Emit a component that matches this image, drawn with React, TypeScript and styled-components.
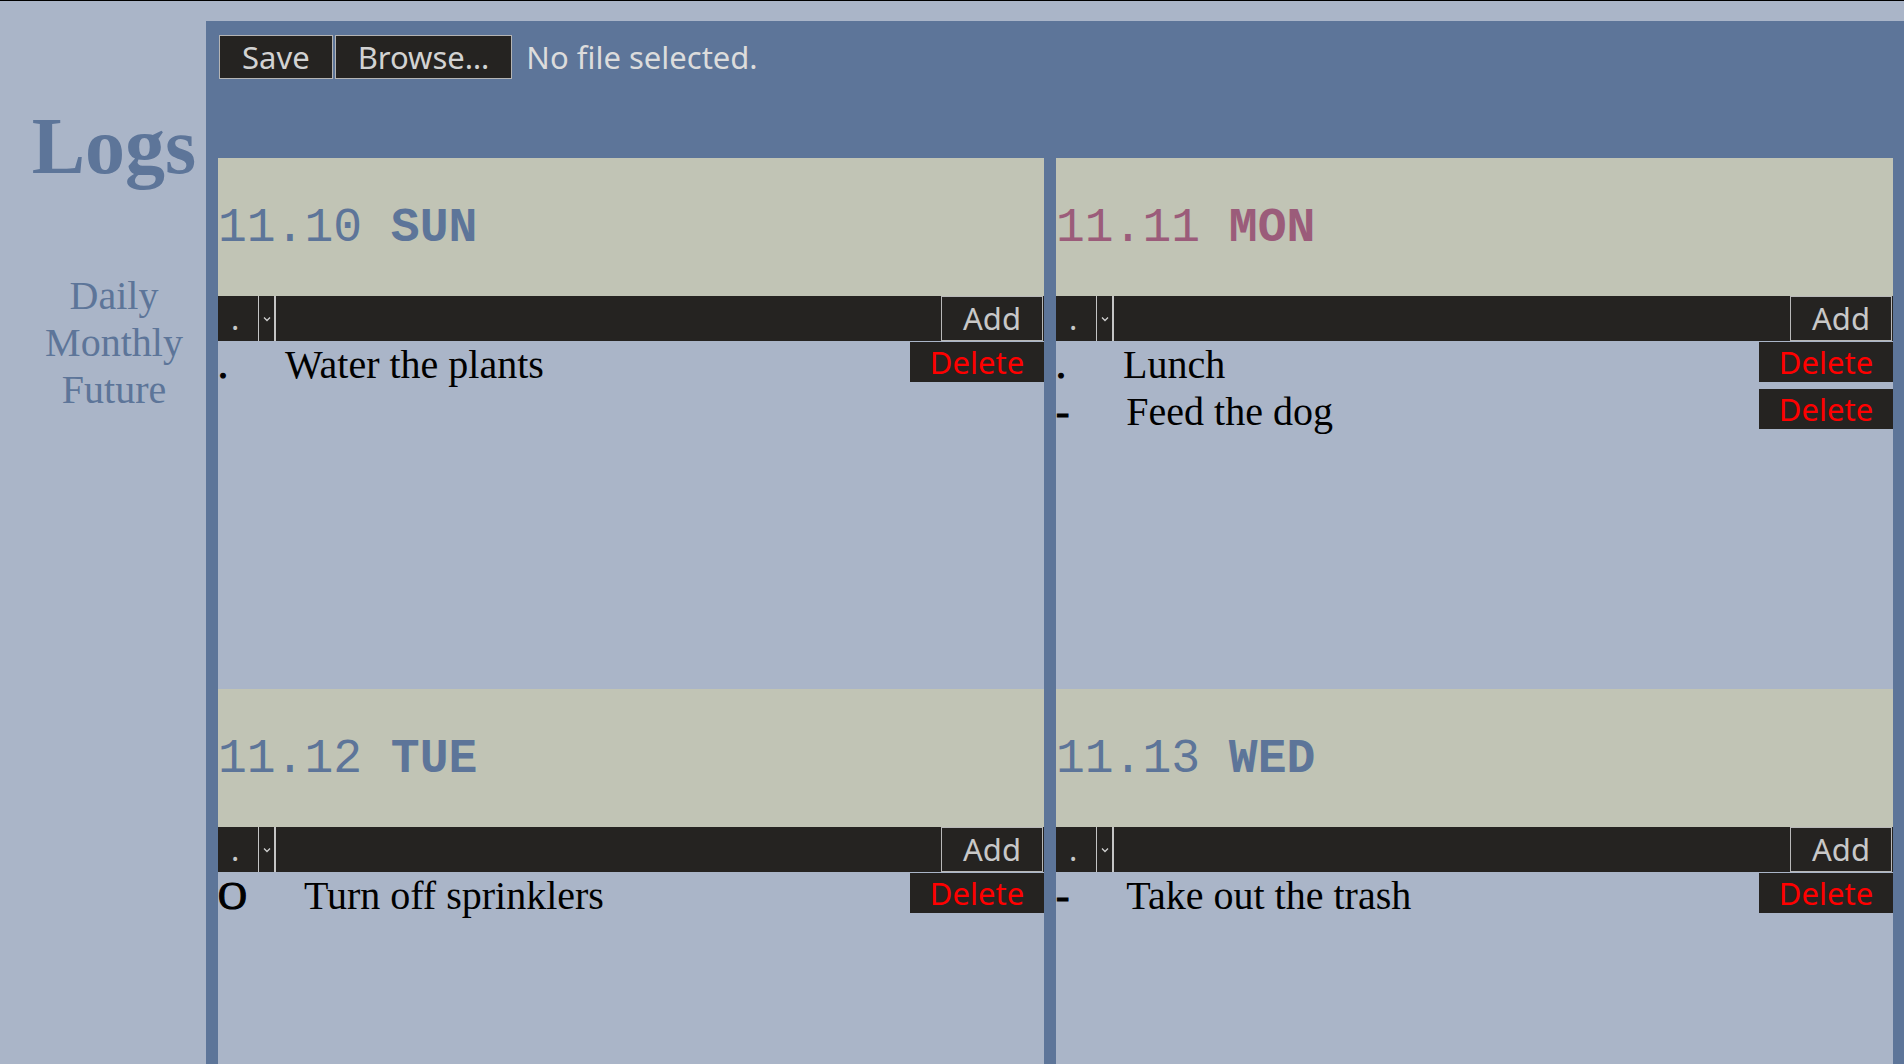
import styled, { createGlobalStyle } from 'styled-components'

const GlobalStyle = createGlobalStyle`
  html, body {
    margin: 0;
    padding: 0;
    overflow: hidden;
    background: #aab5c8;
  }
  body {
    font-family: "Liberation Serif", serif;
  }
`

type Entry = { mark: string, text: string }
type Day = { date: string, weekday: string, color: string, entries: Entry[] }

const days: Day[] = [
  { date: '11.10', weekday: 'SUN', color: '#5d7599', entries: [{ mark: '.', text: 'Water the plants' }] },
  { date: '11.11', weekday: 'MON', color: '#9b5c7a', entries: [{ mark: '.', text: 'Lunch' }, { mark: '-', text: 'Feed the dog' }] },
  { date: '11.12', weekday: 'TUE', color: '#5d7599', entries: [{ mark: 'O', text: 'Turn off sprinklers' }] },
  { date: '11.13', weekday: 'WED', color: '#5d7599', entries: [{ mark: '-', text: 'Take out the trash' }] },
]

const Page = styled.div`
  display: flex;
  border-top: 1px solid #000;
`

const Sidebar = styled.aside`
  flex: 0 0 206px;
  box-sizing: border-box;
  padding-left: 22px;
  text-align: center;
  color: #5d7599;
`

const Title = styled.h1`
  margin: 100px 0 0;
  font-family: "Liberation Serif", serif;
  font-size: 80px;
  font-weight: bold;
`

const Nav = styled.nav`
  margin-top: 80px;
  display: flex;
  flex-direction: column;
  font-size: 40px;
`

const NavLink = styled.a`
  color: #5d7599;
  text-decoration: none;
`

const Panel = styled.main`
  flex: 1;
  margin-top: 20px;
  padding: 14px 11px 0 12px;
  background: #5d7599;
`

const Toolbar = styled.div`
  display: flex;
  align-items: center;
  height: 44px;
  margin: 0 0 79px 1px;
  font-family: "Noto Sans", sans-serif;
  font-size: 31px;
`

const ToolButton = styled.button`
  height: 44px;
  padding: 0 22px;
  margin-right: 2px;
  background: #252321;
  border: 1px solid #b4b4b4;
  color: #d2d2d2;
  font: inherit;
  line-height: 1;
`

const FileName = styled.span`
  margin-left: 12px;
  color: #dcdcdc;
`

const Grid = styled.div`
  display: grid;
  grid-template-columns: 826px 837px;
  grid-auto-rows: 531px;
  column-gap: 12px;
`

const Card = styled.section`
  display: flex;
  flex-direction: column;
  background: #aab5c8;
`

const CardHeader = styled.header<{ $color: string }>`
  height: 138px;
  box-sizing: border-box;
  padding-top: 2px;
  display: flex;
  align-items: center;
  background: #c1c4b5;
  color: ${p => p.$color};
  font-family: "Liberation Mono", monospace;
  font-size: 48px;
  white-space: pre;
`

const EntryRow = styled.form`
  display: flex;
  height: 45px;
  background: #252321;
  font-family: "Noto Sans", sans-serif;
  font-size: 31px;
`

const Picker = styled.div`
  display: flex;
  flex: 0 0 auto;
`

const PickerValue = styled.span`
  width: 40px;
  box-sizing: border-box;
  padding-left: 13px;
  color: #c8c8c8;
  line-height: 45px;
`

const PickerArrow = styled.span`
  width: 15px;
  display: flex;
  align-items: center;
  justify-content: center;
  border-left: 1px solid #c4c4c4;
  border-right: 2px solid #c4c4c4;
`

const EntryInput = styled.input`
  flex: 1;
  min-width: 0;
  background: transparent;
  border: none;
  outline: none;
  color: #d2d2d2;
  font: inherit;
`

const AddButton = styled.button`
  width: 102px;
  margin-right: 1px;
  padding: 0;
  background: #252321;
  border: 1px solid #b8b8b8;
  color: #c8c8c8;
  font: inherit;
  line-height: 1;
`

const Items = styled.ul`
  list-style: none;
  margin: 0;
  padding: 0;
`

const Item = styled.li`
  display: flex;
  align-items: flex-start;
  height: 46px;
  margin-top: 1px;
  font-size: 40px;
  line-height: 46px;
  color: #000;
`

const Mark = styled.span`
  margin-right: 57px;
  -webkit-text-stroke: 1.2px #000;
`

const DeleteButton = styled.button`
  margin-left: auto;
  width: 134px;
  height: 40px;
  padding: 0;
  background: #252321;
  border: none;
  color: #ff0000;
  font-family: "Noto Sans", sans-serif;
  font-size: 31px;
  line-height: 1;
`

function Chevron() {
  return (
    <svg width="8" height="6" viewBox="0 0 8 6">
      <path d="M1 1.5 L4 4.5 L7 1.5" fill="none" stroke="#cfcfcf" strokeWidth="1.3" />
    </svg>
  )
}

export default function App() {
  return (
    <Page>
      <GlobalStyle />
      <Sidebar>
        <Title>Logs</Title>
        <Nav>
          <NavLink>Daily</NavLink>
          <NavLink>Monthly</NavLink>
          <NavLink>Future</NavLink>
        </Nav>
      </Sidebar>
      <Panel>
        <Toolbar>
          <ToolButton>Save</ToolButton>
          <ToolButton>Browse…</ToolButton>
          <FileName>No file selected.</FileName>
        </Toolbar>
        <Grid>
          {days.map(day => (
            <Card key={day.date}>
              <CardHeader $color={day.color}>
                {day.date} <b>{day.weekday}</b>
              </CardHeader>
              <EntryRow onSubmit={e => e.preventDefault()}>
                <Picker>
                  <PickerValue>.</PickerValue>
                  <PickerArrow><Chevron /></PickerArrow>
                </Picker>
                <EntryInput type="text" />
                <AddButton type="submit">Add</AddButton>
              </EntryRow>
              <Items>
                {day.entries.map(entry => (
                  <Item key={entry.text}>
                    <Mark>{entry.mark}</Mark>
                    <span>{entry.text}</span>
                    <DeleteButton>Delete</DeleteButton>
                  </Item>
                ))}
              </Items>
            </Card>
          ))}
        </Grid>
      </Panel>
    </Page>
  )
}
